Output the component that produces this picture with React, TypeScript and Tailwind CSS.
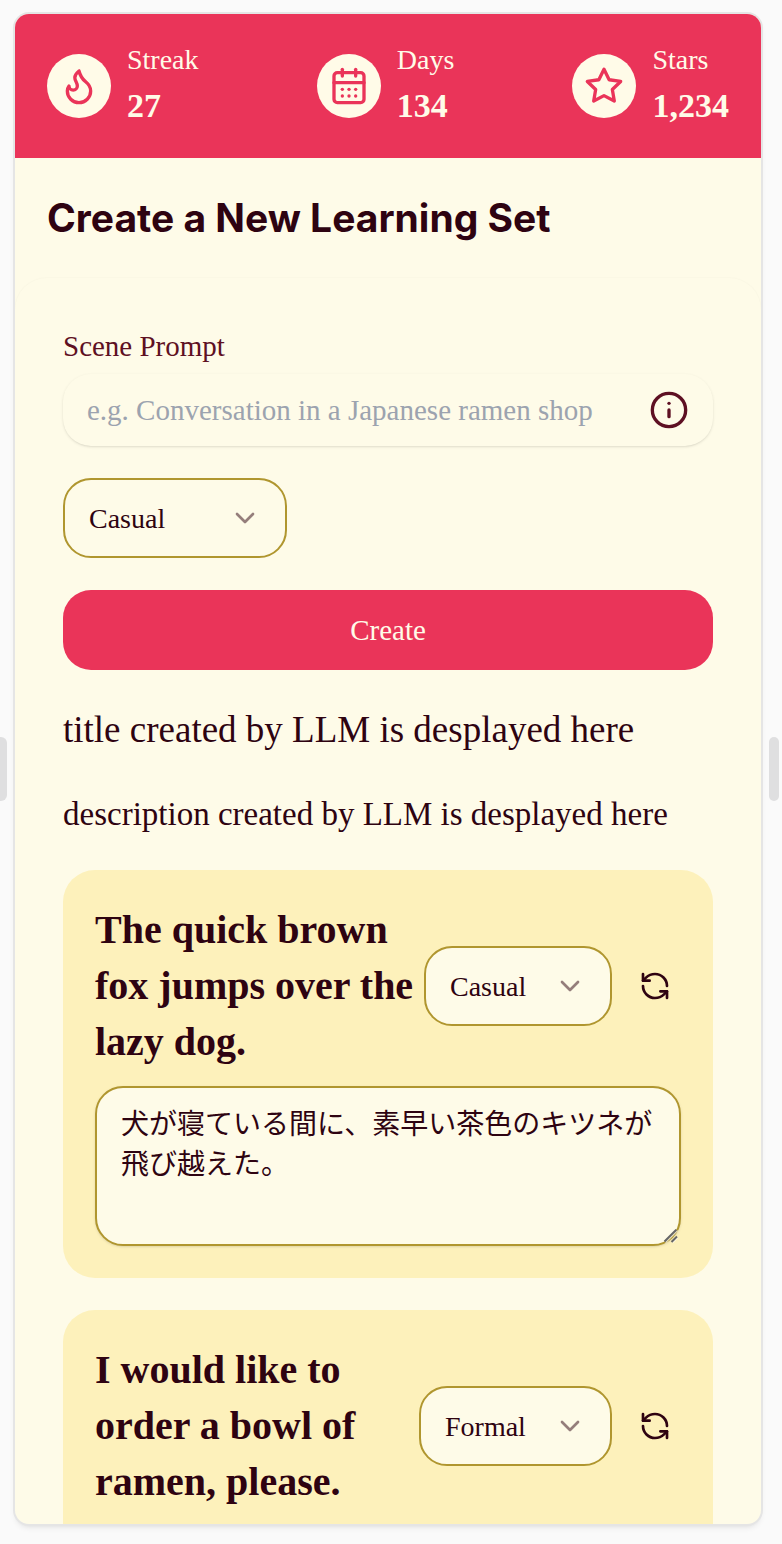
import { useId } from "react";
import type { ReactNode } from "react";
import { CalendarDays, ChevronDown, Flame, Info, RefreshCcw } from "lucide-react";

const serif = "font-['Liberation_Serif','Noto_Sans_CJK_JP',serif]";

function StarIcon() {
  return (
    <svg
      viewBox="0 0 24 24"
      className="size-10"
      fill="none"
      stroke="currentColor"
      strokeWidth="2"
      strokeLinecap="round"
      strokeLinejoin="round"
      aria-hidden="true"
    >
      <polygon points="12 2 15.09 8.26 22 9.27 17 14.14 18.18 21.02 12 17.77 5.82 21.02 7 14.14 2 9.27 8.91 8.26 12 2" />
    </svg>
  );
}

function ResizeGrip() {
  return (
    <svg
      viewBox="0 0 24 24"
      className="pointer-events-none absolute right-0 bottom-0 size-6"
      fill="none"
      strokeLinecap="butt"
      aria-hidden="true"
    >
      <path d="M8.5 20.5 20.5 8.5M15.5 20.5 20.5 15.5" stroke="#ffffff" strokeOpacity="0.7" strokeWidth="1.5" />
      <path d="M7.5 19.5 19.3 7.7M14.5 20 20 14.5" stroke="#666666" strokeWidth="2" />
    </svg>
  );
}

function Stat({ icon, label, value }: { icon: ReactNode; label: string; value: string }) {
  return (
    <div className="flex items-center gap-4">
      <div className="flex size-16 shrink-0 items-center justify-center rounded-full bg-[#fffbe8] text-[#ea3459]">
        {icon}
      </div>
      <dl className="text-[#fffbe8]">
        <dt className="pb-3 text-[28px] leading-7">{label}</dt>
        <dd className="text-[34px] leading-10 font-bold">{value}</dd>
      </dl>
    </div>
  );
}

function StyleSelect({ value, className }: { value: string; className: string }) {
  return (
    <div className={`relative shrink-0 ${className}`}>
      <select
        aria-label="Tone"
        defaultValue={value}
        className="h-20 w-full appearance-none rounded-[28px] border-2 border-[#b0962f] bg-[#fefbe8] pt-[2px] pr-16 pl-6 text-[28px] text-[#2e0311]"
      >
        <option>Casual</option>
        <option>Formal</option>
      </select>
      <ChevronDown className="pointer-events-none absolute top-6 right-[26px] size-8 text-[#2e0311] opacity-50" />
    </div>
  );
}

function PhraseCard({
  text,
  tone,
  selectWidth,
  translation,
}: {
  text: string;
  tone: string;
  selectWidth: string;
  translation: string;
}) {
  const id = useId();
  return (
    <article className="flex flex-col gap-4 rounded-[32px] bg-[#fdf1bb] p-8">
      <div className="flex items-center justify-between">
        <h2 className="min-w-0 flex-1 text-[40px] leading-14 font-bold">
          <label htmlFor={id}>{text}</label>
        </h2>
        <div className="flex shrink-0 items-center gap-4">
          <StyleSelect value={tone} className={selectWidth} />
          <button type="button" aria-label="Regenerate" className="flex h-16 w-[53px] items-center justify-center">
            <RefreshCcw className="size-8" />
          </button>
        </div>
      </div>
      <div className="relative">
        <textarea
          id={id}
          defaultValue={translation}
          className="block h-40 w-full resize-none rounded-[28px] border-2 border-[#b0962f] bg-[#fefbe8] px-6 py-[14px] font-['Noto_Sans_CJK_JP',sans-serif] text-[28px] leading-10 shadow-sm"
        />
        <ResizeGrip />
      </div>
    </article>
  );
}

export default function App() {
  return (
    <div className={`flex h-screen items-stretch gap-2 bg-[#fafafa] pt-[14px] pr-[3px] pb-5 text-[#2e0311] ${serif}`}>
      <div className="h-16 w-[7px] shrink-0 self-center rounded-r-md bg-[#dfdfe0]" />
      <main className="min-w-0 flex-1 overflow-hidden rounded-[14px] bg-[#fefbe8] shadow-md ring-2 ring-[#e5e5e5]">
        <header className="flex items-center justify-between bg-[#ea3459] p-8">
          <Stat icon={<Flame className="size-10" />} label="Streak" value="27" />
          <Stat icon={<CalendarDays className="size-10" />} label="Days" value="134" />
          <Stat icon={<StarIcon />} label="Stars" value="1,234" />
        </header>
        <h1 className="p-8 font-['Inter',sans-serif] text-[39px] leading-14 font-bold">Create a New Learning Set</h1>
        <section className="flex flex-col gap-8 rounded-[32px] p-12 shadow-[0_0_2px_rgba(0,0,0,0.05)]">
          <form className="flex flex-col gap-8" onSubmit={(e) => e.preventDefault()}>
            <div className="flex flex-col gap-2">
              <label htmlFor="scene" className="text-[29px] leading-10 text-[#5e1023]">
                Scene Prompt
              </label>
              <div className="flex h-[72px] items-center rounded-[28px] px-6 shadow-sm">
                <input
                  id="scene"
                  type="text"
                  placeholder="e.g. Conversation in a Japanese ramen shop"
                  className="min-w-0 flex-1 bg-transparent pt-[2px] text-[29px] outline-none placeholder:text-[#9ca3af]"
                />
                <button type="button" aria-label="About scene prompts" className="shrink-0 text-[#5e1023]">
                  <Info className="size-10" />
                </button>
              </div>
            </div>
            <StyleSelect value="Casual" className="w-56" />
            <button type="submit" className="h-20 rounded-[28px] bg-[#ea3459] pt-[2px] text-[29px] text-[#fffbe8]">
              Create
            </button>
          </form>
          <p className="text-[37px] leading-14">title created by LLM is desplayed here</p>
          <p className="text-[33px] leading-12">description created by LLM is desplayed here</p>
          <PhraseCard
            text="The quick brown fox jumps over the lazy dog."
            tone="Casual"
            selectWidth="w-[188px]"
            translation="犬が寝ている間に、素早い茶色のキツネが飛び越えた。"
          />
          <PhraseCard
            text="I would like to order a bowl of ramen, please."
            tone="Formal"
            selectWidth="w-[193px]"
            translation="ラーメンを一杯お願いします。"
          />
        </section>
      </main>
      <div className="h-16 w-[10px] shrink-0 self-center rounded-md bg-[#dfdfe0]" />
    </div>
  );
}
